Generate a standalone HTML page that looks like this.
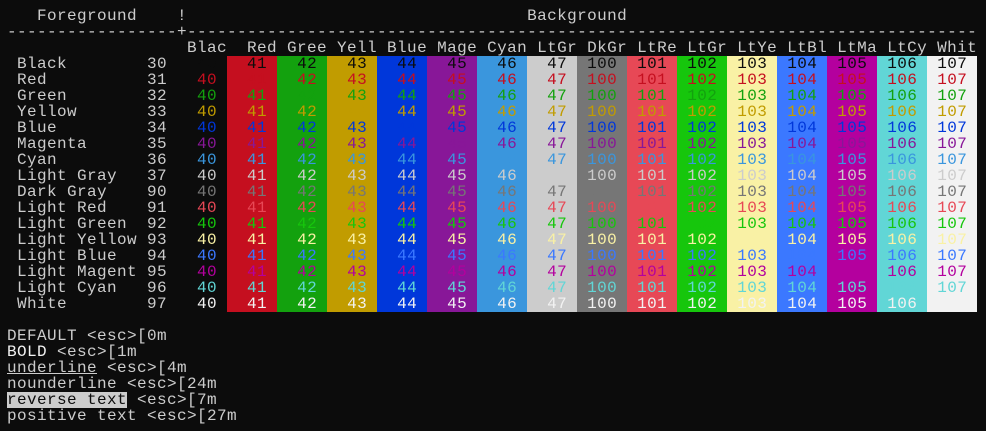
<!DOCTYPE html>
<html><head><meta charset="utf-8"><style>
html,body{margin:0;padding:0;background:#0c0c0c;width:986px;height:431px;overflow:hidden}
pre{margin:0;padding:8px 0 0 7px;font-family:"Liberation Mono",monospace;font-size:16px;letter-spacing:0.4px;line-height:16px;color:#cccccc;white-space:pre}
pre span[class^="b"],.rev{display:inline-block;height:16px;line-height:16px;vertical-align:top}
.f30{color:#0c0c0c}.f31{color:#c50f1f}.f32{color:#13a10e}.f33{color:#c19c00}.f34{color:#0037da}.f35{color:#881798}.f36{color:#3a96dd}.f37{color:#cccccc}
.f90{color:#767676}.f91{color:#e74856}.f92{color:#16c60c}.f93{color:#f9f1a5}.f94{color:#3b78ff}.f95{color:#b4009e}.f96{color:#61d6d6}.f97{color:#f2f2f2}
.b40{background:#0c0c0c}.b41{background:#c50f1f}.b42{background:#13a10e}.b43{background:#c19c00}.b44{background:#0037da}.b45{background:#881798}.b46{background:#3a96dd}.b47{background:#cccccc}
.b100{background:#767676}.b101{background:#e74856}.b102{background:#16c60c}.b103{background:#f9f1a5}.b104{background:#3b78ff}.b105{background:#b4009e}.b106{background:#61d6d6}.b107{background:#f2f2f2}
.rev{background:#cccccc;color:#0c0c0c}.bold{color:#f2f2f2}
</style></head><body><pre>   Foreground    !                                  Background
-----------------+-------------------------------------------------------------------------------
                  Blac  Red Gree Yell Blue Mage Cyan LtGr DkGr LtRe LtGr LtYe LtBl LtMa LtCy Whit
 Black        30 <span class="f30"><span class="b40">  40 </span><span class="b41">  41 </span><span class="b42">  42 </span><span class="b43">  43 </span><span class="b44">  44 </span><span class="b45">  45 </span><span class="b46">  46 </span><span class="b47">  47 </span><span class="b100"> 100 </span><span class="b101"> 101 </span><span class="b102"> 102 </span><span class="b103"> 103 </span><span class="b104"> 104 </span><span class="b105"> 105 </span><span class="b106"> 106 </span><span class="b107"> 107 </span></span>
 Red          31 <span class="f31"><span class="b40">  40 </span><span class="b41">  41 </span><span class="b42">  42 </span><span class="b43">  43 </span><span class="b44">  44 </span><span class="b45">  45 </span><span class="b46">  46 </span><span class="b47">  47 </span><span class="b100"> 100 </span><span class="b101"> 101 </span><span class="b102"> 102 </span><span class="b103"> 103 </span><span class="b104"> 104 </span><span class="b105"> 105 </span><span class="b106"> 106 </span><span class="b107"> 107 </span></span>
 Green        32 <span class="f32"><span class="b40">  40 </span><span class="b41">  41 </span><span class="b42">  42 </span><span class="b43">  43 </span><span class="b44">  44 </span><span class="b45">  45 </span><span class="b46">  46 </span><span class="b47">  47 </span><span class="b100"> 100 </span><span class="b101"> 101 </span><span class="b102"> 102 </span><span class="b103"> 103 </span><span class="b104"> 104 </span><span class="b105"> 105 </span><span class="b106"> 106 </span><span class="b107"> 107 </span></span>
 Yellow       33 <span class="f33"><span class="b40">  40 </span><span class="b41">  41 </span><span class="b42">  42 </span><span class="b43">  43 </span><span class="b44">  44 </span><span class="b45">  45 </span><span class="b46">  46 </span><span class="b47">  47 </span><span class="b100"> 100 </span><span class="b101"> 101 </span><span class="b102"> 102 </span><span class="b103"> 103 </span><span class="b104"> 104 </span><span class="b105"> 105 </span><span class="b106"> 106 </span><span class="b107"> 107 </span></span>
 Blue         34 <span class="f34"><span class="b40">  40 </span><span class="b41">  41 </span><span class="b42">  42 </span><span class="b43">  43 </span><span class="b44">  44 </span><span class="b45">  45 </span><span class="b46">  46 </span><span class="b47">  47 </span><span class="b100"> 100 </span><span class="b101"> 101 </span><span class="b102"> 102 </span><span class="b103"> 103 </span><span class="b104"> 104 </span><span class="b105"> 105 </span><span class="b106"> 106 </span><span class="b107"> 107 </span></span>
 Magenta      35 <span class="f35"><span class="b40">  40 </span><span class="b41">  41 </span><span class="b42">  42 </span><span class="b43">  43 </span><span class="b44">  44 </span><span class="b45">  45 </span><span class="b46">  46 </span><span class="b47">  47 </span><span class="b100"> 100 </span><span class="b101"> 101 </span><span class="b102"> 102 </span><span class="b103"> 103 </span><span class="b104"> 104 </span><span class="b105"> 105 </span><span class="b106"> 106 </span><span class="b107"> 107 </span></span>
 Cyan         36 <span class="f36"><span class="b40">  40 </span><span class="b41">  41 </span><span class="b42">  42 </span><span class="b43">  43 </span><span class="b44">  44 </span><span class="b45">  45 </span><span class="b46">  46 </span><span class="b47">  47 </span><span class="b100"> 100 </span><span class="b101"> 101 </span><span class="b102"> 102 </span><span class="b103"> 103 </span><span class="b104"> 104 </span><span class="b105"> 105 </span><span class="b106"> 106 </span><span class="b107"> 107 </span></span>
 Light Gray   37 <span class="f37"><span class="b40">  40 </span><span class="b41">  41 </span><span class="b42">  42 </span><span class="b43">  43 </span><span class="b44">  44 </span><span class="b45">  45 </span><span class="b46">  46 </span><span class="b47">  47 </span><span class="b100"> 100 </span><span class="b101"> 101 </span><span class="b102"> 102 </span><span class="b103"> 103 </span><span class="b104"> 104 </span><span class="b105"> 105 </span><span class="b106"> 106 </span><span class="b107"> 107 </span></span>
 Dark Gray    90 <span class="f90"><span class="b40">  40 </span><span class="b41">  41 </span><span class="b42">  42 </span><span class="b43">  43 </span><span class="b44">  44 </span><span class="b45">  45 </span><span class="b46">  46 </span><span class="b47">  47 </span><span class="b100"> 100 </span><span class="b101"> 101 </span><span class="b102"> 102 </span><span class="b103"> 103 </span><span class="b104"> 104 </span><span class="b105"> 105 </span><span class="b106"> 106 </span><span class="b107"> 107 </span></span>
 Light Red    91 <span class="f91"><span class="b40">  40 </span><span class="b41">  41 </span><span class="b42">  42 </span><span class="b43">  43 </span><span class="b44">  44 </span><span class="b45">  45 </span><span class="b46">  46 </span><span class="b47">  47 </span><span class="b100"> 100 </span><span class="b101"> 101 </span><span class="b102"> 102 </span><span class="b103"> 103 </span><span class="b104"> 104 </span><span class="b105"> 105 </span><span class="b106"> 106 </span><span class="b107"> 107 </span></span>
 Light Green  92 <span class="f92"><span class="b40">  40 </span><span class="b41">  41 </span><span class="b42">  42 </span><span class="b43">  43 </span><span class="b44">  44 </span><span class="b45">  45 </span><span class="b46">  46 </span><span class="b47">  47 </span><span class="b100"> 100 </span><span class="b101"> 101 </span><span class="b102"> 102 </span><span class="b103"> 103 </span><span class="b104"> 104 </span><span class="b105"> 105 </span><span class="b106"> 106 </span><span class="b107"> 107 </span></span>
 Light Yellow 93 <span class="f93"><span class="b40">  40 </span><span class="b41">  41 </span><span class="b42">  42 </span><span class="b43">  43 </span><span class="b44">  44 </span><span class="b45">  45 </span><span class="b46">  46 </span><span class="b47">  47 </span><span class="b100"> 100 </span><span class="b101"> 101 </span><span class="b102"> 102 </span><span class="b103"> 103 </span><span class="b104"> 104 </span><span class="b105"> 105 </span><span class="b106"> 106 </span><span class="b107"> 107 </span></span>
 Light Blue   94 <span class="f94"><span class="b40">  40 </span><span class="b41">  41 </span><span class="b42">  42 </span><span class="b43">  43 </span><span class="b44">  44 </span><span class="b45">  45 </span><span class="b46">  46 </span><span class="b47">  47 </span><span class="b100"> 100 </span><span class="b101"> 101 </span><span class="b102"> 102 </span><span class="b103"> 103 </span><span class="b104"> 104 </span><span class="b105"> 105 </span><span class="b106"> 106 </span><span class="b107"> 107 </span></span>
 Light Magent 95 <span class="f95"><span class="b40">  40 </span><span class="b41">  41 </span><span class="b42">  42 </span><span class="b43">  43 </span><span class="b44">  44 </span><span class="b45">  45 </span><span class="b46">  46 </span><span class="b47">  47 </span><span class="b100"> 100 </span><span class="b101"> 101 </span><span class="b102"> 102 </span><span class="b103"> 103 </span><span class="b104"> 104 </span><span class="b105"> 105 </span><span class="b106"> 106 </span><span class="b107"> 107 </span></span>
 Light Cyan   96 <span class="f96"><span class="b40">  40 </span><span class="b41">  41 </span><span class="b42">  42 </span><span class="b43">  43 </span><span class="b44">  44 </span><span class="b45">  45 </span><span class="b46">  46 </span><span class="b47">  47 </span><span class="b100"> 100 </span><span class="b101"> 101 </span><span class="b102"> 102 </span><span class="b103"> 103 </span><span class="b104"> 104 </span><span class="b105"> 105 </span><span class="b106"> 106 </span><span class="b107"> 107 </span></span>
 White        97 <span class="f97"><span class="b40">  40 </span><span class="b41">  41 </span><span class="b42">  42 </span><span class="b43">  43 </span><span class="b44">  44 </span><span class="b45">  45 </span><span class="b46">  46 </span><span class="b47">  47 </span><span class="b100"> 100 </span><span class="b101"> 101 </span><span class="b102"> 102 </span><span class="b103"> 103 </span><span class="b104"> 104 </span><span class="b105"> 105 </span><span class="b106"> 106 </span><span class="b107"> 107 </span></span>

DEFAULT &lt;esc&gt;[0m
<span class="bold">BOLD</span> &lt;esc&gt;[1m
<u>underline</u> &lt;esc&gt;[4m
nounderline &lt;esc&gt;[24m
<span class="rev">reverse text</span> &lt;esc&gt;[7m
positive text &lt;esc&gt;[27m</pre></body></html>
